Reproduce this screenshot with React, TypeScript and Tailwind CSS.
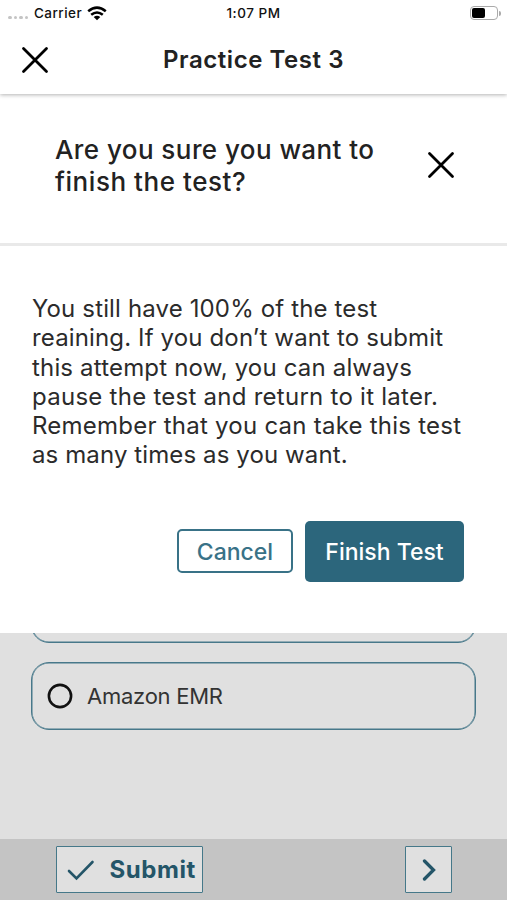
import React from "react";

const messageLines = [
  { text: "You still have 100% of the test", tracking: "tracking-[0.14px]" },
  { text: "reaining. If you don’t want to submit", tracking: "tracking-[0.14px]" },
  { text: "this attempt now, you can always", tracking: "tracking-[0.17px]" },
  { text: "pause the test and return to it later.", tracking: "tracking-[0.26px]" },
  { text: "Remember that you can take this test", tracking: "tracking-[0.24px]" },
  { text: "as many times as you want.", tracking: "tracking-[0.11px]" },
];

const CloseIcon = () => (
  <svg width="28" height="28" viewBox="0 0 28 28" fill="none" stroke="#000" strokeWidth="2.8" strokeLinecap="round">
    <path d="m2.5 2.5 23 23M25.5 2.5l-23 23" />
  </svg>
);

const StatusBar = () => (
  <div className="flex h-[26px] items-center text-[13.5px] font-medium text-[#111]">
    <div className="flex w-[169px] items-center pl-2">
      <div className="flex gap-[2px] pt-[9px]">
        {[0, 1, 2, 3].map((dot) => (
          <span key={dot} className="h-[3.5px] w-[3.5px] rounded-full bg-[#c4c4c4]" />
        ))}
      </div>
      <span className="ml-[6px] tracking-[0.45px]">Carrier</span>
      <svg className="ml-[5px]" width="20" height="15" viewBox="0 0 20 15" fill="none" stroke="#000" strokeWidth="2.6">
        <path d="M1.2 5.2Q10-1.8 18.8 5.2M4.2 8.8Q10 4.2 15.8 8.8" />
        <path d="M6.7 11Q10 8.4 13.3 11L10 14.3Z" fill="#000" stroke="none" />
      </svg>
    </div>
    <span className="w-[169px] pt-px text-center tracking-[0.5px]">1:07 PM</span>
    <div className="flex w-[169px] items-center justify-end pr-[6px]">
      <span className="h-[14px] w-[28px] rounded-[4px] border-[1.5px] border-[#aaa] p-px">
        <span className="block h-full w-[13px] rounded-[2px] bg-black" />
      </span>
      <span className="ml-px h-[5px] w-[2px] rounded-r bg-[#aaa]" />
    </div>
  </div>
);

const App = () => {
  return (
    <main className="flex h-[900px] w-[507px] flex-col overflow-hidden bg-[#e0e0e0] font-[Inter,sans-serif] text-[#222]">
      <header className="relative z-10 h-[94px] shrink-0 bg-white shadow-[0_1px_4px_rgba(0,0,0,0.3)]">
        <StatusBar />
        <div className="grid h-[68px] grid-cols-[80px_1fr_80px] items-center">
          <button aria-label="Close test" className="pl-[21px]"><CloseIcon /></button>
          <h1 className="text-center text-2xl font-semibold tracking-[0.55px]">Practice Test 3</h1>
        </div>
      </header>

      {/* Confirmation dialog */}
      <section className="h-[539px] shrink-0 bg-white">
        <div className="flex h-[152px] justify-between border-b-[3px] border-[#e9e9e9] pt-10 pr-[52px] pl-[55px]">
          <h2 className="text-[26px] leading-8 font-medium">
            <span className="tracking-[0.43px]">Are you sure you want to</span>
            <br />
            <span className="tracking-[0.55px]">finish the test?</span>
          </h2>
          <button aria-label="Close dialog" className="h-[62px]"><CloseIcon /></button>
        </div>
        <div className="px-8 pt-[48px] text-2xl leading-[29.3px] text-[#2b2b2b]">
          {messageLines.map((line) => (
            <p key={line.text} className={`whitespace-nowrap ${line.tracking}`}>{line.text}</p>
          ))}
        </div>
        <div className="mt-[51px] flex items-center justify-end gap-3 pr-[43px] text-[23px] font-medium">
          <button className="h-[44px] w-[116px] rounded-[5px] border-2 border-[#397287] pt-px text-[#397287]">Cancel</button>
          <button className="h-[61px] w-[159px] rounded-[5px] bg-[#2c667c] pt-px text-white">Finish Test</button>
        </div>
      </section>

      {/* Answers behind the dialog */}
      <section className="flex-1 px-[31px]">
        <div className="h-[10px] overflow-hidden">
          <div className="-mt-[58px] h-[68px] rounded-[18px] border border-[#47788a] shadow-[inset_0_0_0_0.5px_#47788a]" />
        </div>
        <div className="mt-[19px] flex h-[68px] items-center rounded-[18px] border border-[#47788a] pl-[15px] shadow-[inset_0_0_0_0.5px_#47788a]">
          <svg width="26" height="26" viewBox="0 0 26 26" fill="none" stroke="#111" strokeWidth="2.6">
            <circle cx="13" cy="13" r="11.1" />
          </svg>
          <span className="ml-[14px] pt-px text-[22px] tracking-[-0.25px] text-[#333]">Amazon EMR</span>
        </div>
      </section>

      <footer className="flex h-[61px] shrink-0 items-start justify-between bg-[#c4c4c4] pt-[7px] pr-[55px] pl-14 text-[#245568]">
        <button className="flex h-[47px] w-[147px] items-center justify-between rounded-[1px] border border-[#457889] bg-[#e0e0e0] pr-[6px] pl-[10px] text-2xl font-bold">
          <svg width="28" height="22" viewBox="0 0 28 22" fill="none" stroke="currentColor" strokeWidth="2.6" strokeLinecap="round">
            <path d="m2 12 7.5 7.5L25.5 3" />
          </svg>
          <span className="tracking-[0.6px]">Submit</span>
        </button>
        <button aria-label="Next question" className="flex h-[47px] w-[47px] items-center justify-center rounded-[1px] border border-[#457889] bg-[#e0e0e0]">
          <svg width="14" height="22" viewBox="0 0 14 22" fill="none" stroke="currentColor" strokeWidth="3.3" strokeLinecap="round">
            <path d="m2.5 2 9 9-9 9" />
          </svg>
        </button>
      </footer>
    </main>
  );
};

export default App;
